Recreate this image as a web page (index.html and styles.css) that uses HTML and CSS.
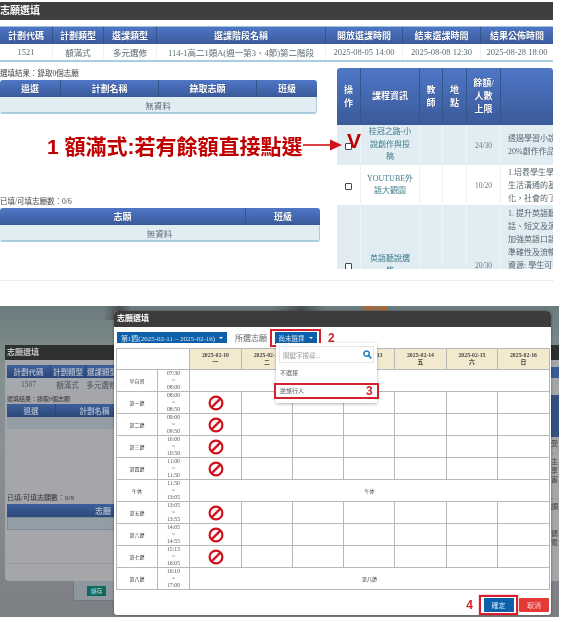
FILE: index.html
```html
<!DOCTYPE html>
<html lang="zh-Hant">
<head>
	<meta charset="UTF-8">
	<title>志願選填</title>
	<link rel="stylesheet" href="styles.css">
</head>
<body>
	<svg class="defs" width="0" height="0">
		<symbol id="ban" viewBox="0 0 16 16">
			<circle cx="8" cy="8" r="6.4" fill="none" stroke="#d0101c" stroke-width="2.2"/>
			<path d="M3.6 12.4 12.4 3.6" stroke="#d0101c" stroke-width="2.2"/>
		</symbol>
	</svg>

	<div class="page">
		<!-- 上半：額滿式 -->
		<section class="top">
			<div class="bar">志願選填</div>
			<table class="tb plan">
				<colgroup><col class="c52"><col class="c51"><col class="c53"><col class="c169"><col class="c77"><col class="c78"><col class="c73"></colgroup>
				<tr><th>計劃代碼</th><th>計劃類型</th><th>選課類型</th><th>選課階段名稱</th><th>開放選課時間</th><th>結束選課時間</th><th>結果公佈時間</th></tr>
				<tr><td>1521</td><td>額滿式</td><td>多元選修</td><td>114-1高二1類A(週一第3、4節)第二階段</td><td>2025-08-05 14:00</td><td>2025-08-08 12:30</td><td>2025-08-28 18:00</td></tr>
			</table>

			<div class="split">
				<div class="left">
					<p class="cap">選填結果：錄取0個志願</p>
					<table class="tb res">
						<colgroup><col class="c60"><col class="c98"><col class="c98"><col class="c61"></colgroup>
						<tr><th>退選</th><th>計劃名稱</th><th>錄取志願</th><th>班級</th></tr>
						<tr class="tint"><td colspan="4">無資料</td></tr>
					</table>
					<p class="cap cap2">已填/可填志願數：0/6</p>
					<table class="tb wish">
						<colgroup><col class="c245"><col class="c75"></colgroup>
						<tr><th>志願</th><th>班級</th></tr>
						<tr class="tint"><td colspan="2">無資料</td></tr>
					</table>
				</div>
				<div class="right">
					<table class="tb course">
						<colgroup><col class="c23"><col class="c59"><col class="c23"><col class="c24"><col class="c34"><col class="c53"></colgroup>
						<tr class="head"><th>操<br>作</th><th>課程資訊</th><th>教<br>師</th><th>地<br>點</th><th>餘額/<br>人數<br>上限</th><th></th></tr>
						<tr class="tint r1">
							<td><span class="chk"></span></td><td class="name">桂冠之路-小<br>說創作與投<br>稿</td><td></td><td></td><td class="num">24/30</td>
							<td class="desc">透過學習小說<br>20%創作作品</td>
						</tr>
						<tr class="r2">
							<td><span class="chk"></span></td><td class="name">YOUTUBE外<br>語大觀園</td><td></td><td></td><td class="num">10/20</td>
							<td class="desc">1.培養學生學<br>生活溝通的基<br>化，社會的了</td>
						</tr>
						<tr class="tint r3">
							<td><span class="chk"></span></td><td class="name">英語聽說選<br>修</td><td></td><td></td><td class="num">20/30</td>
							<td class="desc">1. 提升英語聽<br>話、短文及演<br>加強英語口語<br>準確性及流暢<br>資源: 學生可<br>源，並運用上<br>2. 培養學生<br>自主學習能力<br>與合作</td>
						</tr>
					</table>
				</div>
			</div>

			<div class="note">1 額滿式:若有餘額直接點選</div>
			<svg class="arrow" width="40" height="14" viewBox="0 0 40 14"><path d="M0 7H29" stroke="#d0121b" stroke-width="1.6"/><path d="M27 1.5 39 7 27 12.5Z" fill="#d0121b"/></svg>
			<div class="vee">V</div>
		</section>

		<!-- 下半：志願序 -->
		<section class="desk">
			<span class="orange">選課</span>
			<div class="streak"></div>
			<div class="streak streak2"></div>

			<div class="behind"><span class="save">儲存</span></div>

			<div class="back">
				<div class="back-title">志願選填</div>
				<table class="tb dim b1">
					<colgroup><col class="c43"><col class="c35"><col class="c33"></colgroup>
					<tr><th>計劃代碼</th><th>計劃類型</th><th>選課類型</th></tr>
					<tr><td>1507</td><td>額滿式</td><td>多元選修</td></tr>
				</table>
				<p class="cap back-cap">選填結果：錄取0個志願</p>
				<table class="tb dim b2">
					<colgroup><col class="c48"><col class="c78b"></colgroup>
					<tr><th>退選</th><th>計劃名稱</th></tr>
					<tr><td colspan="2"></td></tr>
				</table>
				<p class="cap back-cap2">已填/可填志願數：0/9</p>
				<table class="tb dim b3">
					<tr><th>志願</th></tr>
					<tr><td></td></tr>
				</table>
				<div class="back-line"></div>
			</div>

			<div class="strip">
				<div class="strip-head"></div>
				<div class="strip-blue"></div>
				<div class="strip-course"></div>
				<div class="strip-text">受<br>-<br>主<br>享<br>害<br><br>-<br>調<br><br><br>健<br>電</div>
			</div>

			<div class="modal">
				<div class="modal-title">志願選填</div>
				<div class="tools">
					<span class="btn week">第1週(2025-02-11 – 2025-02-16)<i class="caret"></i></span>
					<span class="lbl">所選志願：</span>
					<span class="box box2"><span class="btn pick">尚未選擇<i class="caret"></i></span></span>
					<span class="num-red">2</span>
				</div>

				<table class="sch">
					<colgroup><col class="s41"><col class="s32"><col class="d52"><col class="d51"><col class="d51"><col class="d51"><col class="d52"><col class="d51"><col class="d52"></colgroup>
					<tr class="days">
						<th colspan="2" class="blank"></th>
						<th>2025-02-10<br>一</th><th>2025-02-11<br>二</th><th>2025-02-12<br>三</th><th>2025-02-13<br>四</th><th>2025-02-14<br>五</th><th>2025-02-15<br>六</th><th>2025-02-16<br>日</th>
					</tr>
					<tr><td>早自習</td><td class="t">07:30<br>~<br>08:00</td><td colspan="7"></td></tr>
					<tr><td>第一節</td><td class="t">08:00<br>~<br>08:50</td><td><svg class="no"><use href="#ban"/></svg></td><td></td><td></td><td></td><td></td><td></td><td></td></tr>
					<tr><td>第二節</td><td class="t">09:00<br>~<br>09:50</td><td><svg class="no"><use href="#ban"/></svg></td><td></td><td></td><td></td><td></td><td></td><td></td></tr>
					<tr><td>第三節</td><td class="t">10:00<br>~<br>10:50</td><td><svg class="no"><use href="#ban"/></svg></td><td></td><td></td><td></td><td></td><td></td><td></td></tr>
					<tr><td>第四節</td><td class="t">11:00<br>~<br>11:50</td><td><svg class="no"><use href="#ban"/></svg></td><td></td><td></td><td></td><td></td><td></td><td></td></tr>
					<tr><td>午休</td><td class="t">11:50<br>~<br>13:05</td><td colspan="7">午休</td></tr>
					<tr><td>第五節</td><td class="t">13:05<br>~<br>13:55</td><td><svg class="no"><use href="#ban"/></svg></td><td></td><td></td><td></td><td></td><td></td><td></td></tr>
					<tr><td>第六節</td><td class="t">14:05<br>~<br>14:55</td><td><svg class="no"><use href="#ban"/></svg></td><td></td><td></td><td></td><td></td><td></td><td></td></tr>
					<tr><td>第七節</td><td class="t">15:15<br>~<br>16:05</td><td><svg class="no"><use href="#ban"/></svg></td><td></td><td></td><td></td><td></td><td></td><td></td></tr>
					<tr><td>第八節</td><td class="t">16:10<br>~<br>17:00</td><td colspan="7">第八節</td></tr>
				</table>

				<div class="foot">
					<span class="num-red">4</span>
					<span class="box box4"><span class="btn ok">確定</span></span>
					<span class="btn cancel">取消</span>
				</div>

				<div class="menu">
					<div class="search">
						<span>關鍵字搜尋...</span>
						<svg width="9" height="9" viewBox="0 0 10 10"><circle cx="4" cy="4" r="3" fill="none" stroke="#1a7fc4" stroke-width="1.7"/><path d="M6.3 6.3 9.2 9.2" stroke="#1a7fc4" stroke-width="1.9"/></svg>
					</div>
					<div class="opt">不選擇</div>
					<div class="opt opt-on">逆旅行人</div>
				</div>
				<span class="num-red three">3</span>
			</div>
		</section>
	</div>
</body>
</html>
```

FILE: styles.css
```css
* { margin: 0; padding: 0; box-sizing: border-box; }
html, body { background-color: #fff; overflow: hidden; }
body {
	font-family: "Liberation Serif", "Noto Sans CJK TC", serif;
	font-size: 8px;
	color: #444;
}
.defs { position: absolute; }
.page {
	width: 573px;
	height: 622px;
	overflow: hidden;
	filter: blur(0.35px);
}

/* 上半 */
.top {
	position: relative;
	width: 553px;
	height: 306px;
	padding-top: 2px;
}
.bar {
	height: 18px;
	line-height: 18px;
	background-color: #3f3f3f;
	color: #fff;
	font-weight: bold;
	font-size: 10px;
	margin-bottom: 6px;
}

.tb {
	border-collapse: separate;
	border-spacing: 0;
	table-layout: fixed;
	text-align: center;
}
.tb th {
	height: 17px;
	background: linear-gradient(#4f77c6, #3a5a9a);
	color: #fff;
	font-size: 9px;
	font-weight: bold;
	border-left: 1px solid #34548c;
	text-shadow: 0 0 1px #1d3566;
}
.tb th:first-child { border-left: 0; }
.tb td {
	height: 17px;
	font-size: 8.5px;
	color: #5a6a72;
}
.tint td { background-color: #e2edf3; }

.plan {
	width: 553px;
	border-top: 1px solid #9fc4da;
	border-bottom: 2px solid #a9cde0;
	margin-bottom: 6px;
}
.plan td { border-left: 1px solid #eef3f6; height: 16px; }
.plan td:first-child { border-left: 0; }

.c23 { width: 23px; } .c24 { width: 24px; } .c33 { width: 33px; }
.c34 { width: 34px; } .c35 { width: 35px; } .c43 { width: 43px; }
.c48 { width: 48px; } .c51 { width: 51px; } .c52 { width: 52px; }
.c53 { width: 53px; } .c59 { width: 59px; } .c60 { width: 60px; }
.c61 { width: 61px; } .c73 { width: 73px; } .c75 { width: 75px; }
.c77 { width: 77px; } .c78, .c78b { width: 78px; } .c98 { width: 98px; }
.c169 { width: 169px; } .c245 { width: 245px; }

.split {
	display: flex;
	height: 201px;
	margin-bottom: 12px;
}
.left { width: 337px; }
.right {
	width: 216px;
	height: 201px;
	overflow: hidden;
}
.cap {
	font-size: 7.5px;
	line-height: 12px;
	height: 12px;
	color: #444;
}
.cap2 { margin-top: 82px; }

.res, .wish {
	border-bottom: 2px solid #a9cde0;
	border-radius: 3px;
}
.res { width: 317px; }
.wish { width: 320px; }
.res td, .wish td { height: 15px; font-size: 8.5px; border-right: 1px solid #a9cde0; }
.res th:last-child, .wish th:last-child, .course th:last-child { border-top-right-radius: 3px; }
.res th:first-child, .wish th:first-child, .course th:first-child { border-top-left-radius: 3px; }

.course { width: 216px; }
.course .head th { height: 57px; line-height: 13px; }
.course td { border-left: 1px solid #eef3f6; padding: 0; }
.course td:first-child { border-left: 0; }
.r1 td { height: 40px; }
.r2 td { height: 40px; }
.r3 td { height: 120px; }
.course .name { color: #3f7d8c; line-height: 12.5px; font-size: 8px; }
.course .num { color: #6a7a82; font-size: 7.5px; }
.course .desc {
	text-align: left;
	line-height: 13px;
	white-space: nowrap;
	overflow: hidden;
	padding-left: 7px;
	font-size: 8px;
	color: #56666e;
}
.chk {
	display: inline-block;
	width: 7px;
	height: 7px;
	border: 1px solid #445;
	border-radius: 1px;
	background-color: #fff;
	vertical-align: middle;
}

.top::after {
	content: "";
	position: absolute;
	left: 0;
	top: 280px;
	width: 553px;
	border-top: 1px dotted #ddd;
}
.note {
	position: absolute;
	left: 47px;
	top: 133px;
	font-family: "Liberation Sans", "Noto Sans CJK TC", sans-serif;
	font-size: 21px;
	line-height: 28px;
	font-weight: bold;
	color: #c00000;
	white-space: nowrap;
}
.arrow { position: absolute; left: 303px; top: 138px; }
.vee {
	position: absolute;
	left: 347px;
	top: 128px;
	font-family: "Liberation Sans", sans-serif;
	font-size: 21px;
	line-height: 26px;
	font-weight: bold;
	color: #c00000;
}

/* 下半 */
.desk {
	position: relative;
	width: 559px;
	height: 311px;
	overflow: hidden;
	background: linear-gradient(#6c7c7e, #83908f 20%, #8b8f92 45%, #7c8084);
}
.orange {
	position: absolute;
	left: 362px;
	top: -6px;
	font-size: 13px;
	line-height: 14px;
	font-weight: bold;
	color: #b5652c;
}
.streak {
	position: absolute;
	left: 100px;
	top: 0;
	width: 30px;
	height: 14px;
	background: linear-gradient(100deg, transparent 15%, #4a5154 60%, transparent);
}
.streak2 { left: 265px; width: 60px; height: 6px; }
.behind {
	position: absolute;
	left: 73px;
	top: 260px;
	width: 300px;
	height: 35px;
	padding: 19px 0 0 13px;
	background-color: #8d979d;
	border: 1px solid #6e7a82;
	border-radius: 3px;
}
.save {
	display: block;
	width: 19px;
	height: 10px;
	line-height: 10px;
	font-size: 6px;
	text-align: center;
	color: #bcd;
	background-color: #0c6a5d;
}

.back {
	position: absolute;
	left: 5px;
	top: 39px;
	width: 540px;
	height: 236px;
	background-color: #a4a6a9;
	border-radius: 0 0 4px 4px;
	padding: 0 0 0 2px;
}
.back-title {
	height: 15px;
	line-height: 15px;
	margin: 0 0 5px -2px;
	padding-left: 2px;
	background-color: #2f3030;
	color: #c4c4c4;
	font-weight: bold;
	font-size: 8px;
}
.tb.dim th {
	height: 13px;
	background: linear-gradient(#3c5f9d, #2d4878);
	color: #a9b4c6;
	font-size: 7.5px;
	border-left-color: #2d4878;
	text-shadow: none;
}
.tb.dim td {
	height: 12px;
	background-color: #a3a9ad;
	color: #4a545a;
	font-size: 7.5px;
}
.b1 { width: 111px; }
.b2 { width: 126px; }
.tb.b2 td { height: 12px; background-color: #939da5; }
.b3 { width: 200px; }
.tb.dim.b3 th { text-align: left; padding-left: 88px; font-size: 8px; }
.tb.b3 td { height: 13px; background-color: #939da5; border: 1px solid #7d8c96; }
.back-cap {
	margin-top: 2px;
	height: 12px;
	line-height: 14px;
	font-size: 6px;
	color: #333;
}
.back-cap2 {
	margin-top: 63px;
	height: 12px;
	line-height: 12px;
	font-size: 7px;
	color: #333;
}
.back-line {
	margin: 33px 0 0 -2px;
	border-top: 1px solid #999b9e;
}

.strip {
	position: absolute;
	left: 551px;
	top: 39px;
	width: 8px;
	height: 236px;
	background-color: #a4a7aa;
}
.strip-head { height: 15px; background-color: #2e2f2f; }
.strip-blue { height: 11px; margin-top: 7px; background-color: #3a5b96; }
.strip-course { height: 42px; margin-top: 17px; background-color: #33507f; }
.strip-text {
	font-size: 7px;
	line-height: 9px;
	color: #444;
	margin-top: 3px;
}

.modal {
	position: absolute;
	left: 114px;
	top: 5px;
	width: 437px;
	height: 304px;
	background-color: #fff;
	border-radius: 4px 4px 3px 3px;
	box-shadow: 0 0 3px rgba(0, 0, 0, .4);
}
.modal-title {
	height: 16px;
	line-height: 16px;
	padding-left: 3px;
	background-color: #3c3c3c;
	border-radius: 4px 4px 0 0;
	color: #fff;
	font-weight: bold;
	font-size: 8px;
}
.tools {
	display: flex;
	align-items: center;
	height: 21px;
	padding-left: 3px;
}
.btn {
	display: inline-flex;
	align-items: center;
	justify-content: center;
	color: #d6e6f4;
	background-color: #0b60a9;
	font-size: 7px;
	white-space: nowrap;
}
.week { width: 110px; height: 11px; }
.lbl { margin-left: 8px; width: 35px; font-size: 8px; color: #666; white-space: nowrap; }
.box {
	display: inline-flex;
	align-items: center;
	justify-content: center;
	border: 2px solid #d3212d;
}
.box2 { width: 51px; height: 18px; }
.pick { width: 42px; height: 12px; font-size: 6.5px; }
.caret {
	display: inline-block;
	margin-left: 4px;
	border: 2px solid transparent;
	border-top-color: #fff;
	border-bottom: 0;
}
.num-red {
	font-family: "Liberation Sans", sans-serif;
	font-weight: bold;
	font-size: 12px;
	color: #d3212d;
}
.tools .num-red { margin-left: 7px; }

.sch {
	width: 433px;
	margin-left: 2px;
	height: 241px;
	border-collapse: collapse;
	table-layout: fixed;
	text-align: center;
	font-size: 5px;
	color: #444;
}
.sch th, .sch td { border: 1px solid #b8b8b8; }
.s41 { width: 41px; } .s32 { width: 32px; }
.d51 { width: 51px; } .d52 { width: 52px; }
.sch tr { height: 22px; }
.sch .days { height: 21px; }
.days th {
	background-color: #f2e9cf;
	font-size: 5.8px;
	line-height: 7px;
	font-weight: bold;
	color: #444;
}
.days .blank { background-color: #fff; }
.sch .t {
	font-size: 5.7px;
	line-height: 7px;
	color: #555;
	background-color: #fff;
}
.no { display: block; width: 16px; height: 16px; margin: 0 auto; }

.foot {
	display: flex;
	align-items: center;
	justify-content: flex-end;
	height: 26px;
	padding: 3px 2px 0 0;
}
.foot .num-red { margin-right: 6px; }
.box4 { width: 39px; height: 20px; margin-right: 1px; box-shadow: 0 0 1px #d3212d; }
.ok { width: 30px; height: 14px; font-size: 7px; }
.cancel { width: 30px; height: 14px; background-color: #e53935; color: #f6d5d5; font-size: 7px; border-radius: 1px; }

/* 下拉選單 */
.menu {
	position: absolute;
	left: 162px;
	top: 32px;
	width: 101px;
	height: 60px;
	padding: 3px;
	background-color: #fff;
	box-shadow: 0 1px 3px rgba(0, 0, 0, .3);
}
.search {
	display: flex;
	align-items: center;
	justify-content: space-between;
	height: 17px;
	padding: 0 1px 0 3px;
	font-size: 6.5px;
	color: #999;
	border: 1px solid #e6e6e6;
}
.opt {
	height: 19px;
	line-height: 20px;
	padding-left: 1px;
	font-size: 6px;
	color: #555;
}
.menu .opt-on {
	width: 105px;
	height: 16px;
	line-height: 12px;
	margin: 1px -5px 0;
	padding-left: 4px;
	border: 2px solid #d3212d;
}
.three { position: absolute; left: 252px; top: 74px; line-height: 12px; }
```
